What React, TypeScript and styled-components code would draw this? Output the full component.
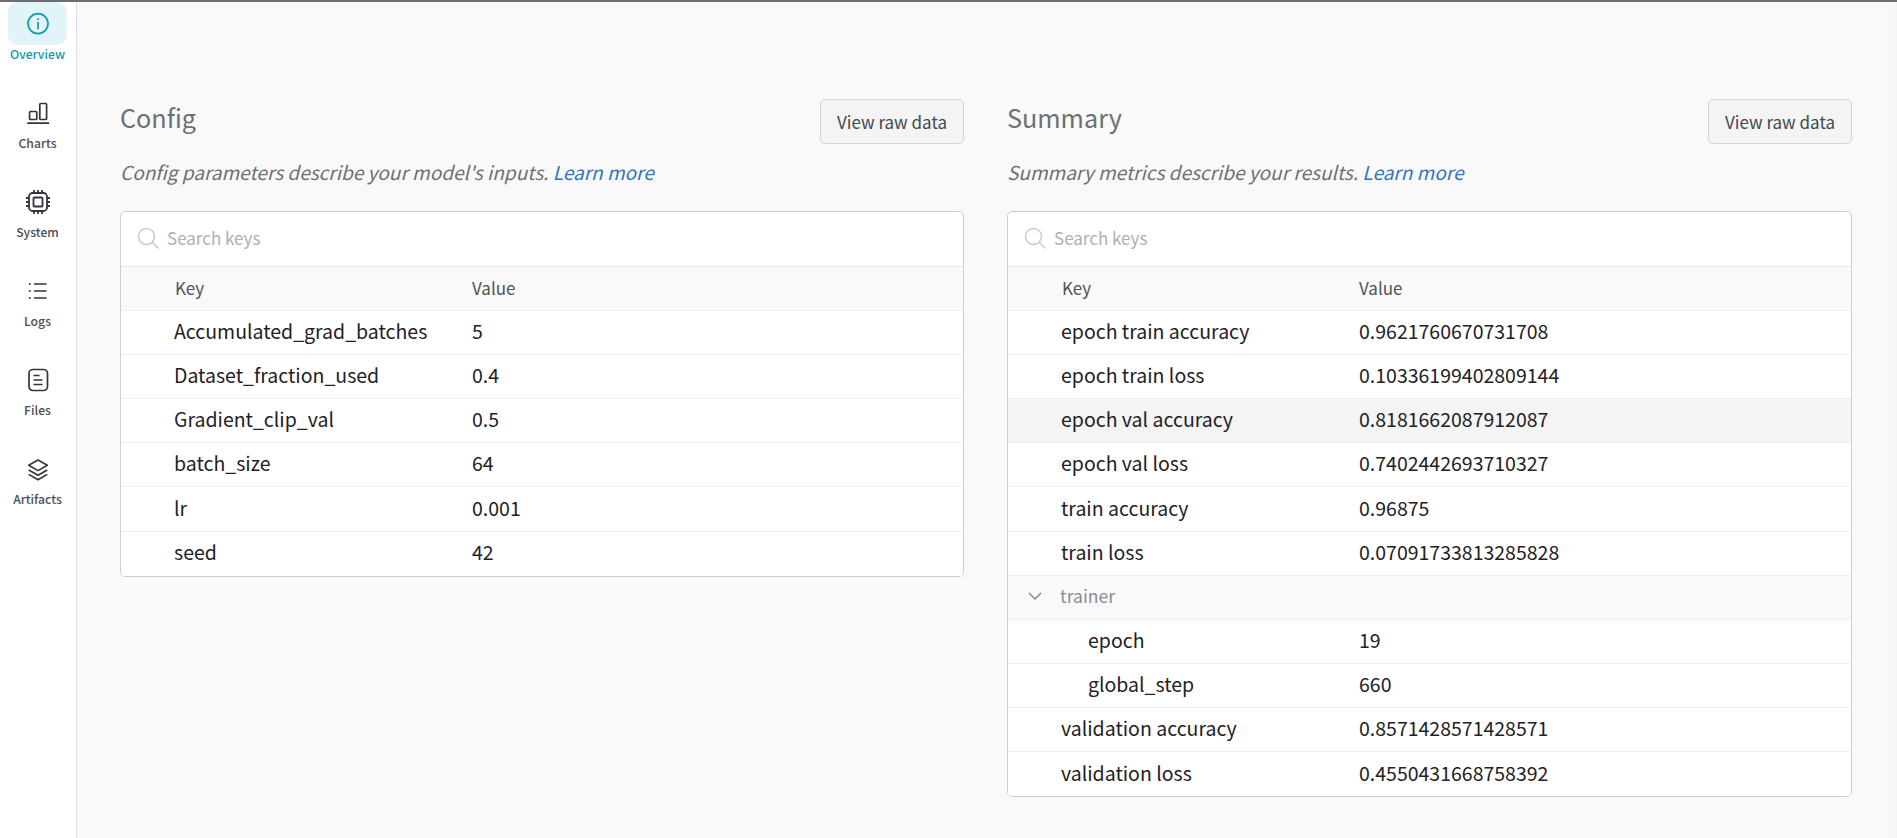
import React from 'react';
import styled, { createGlobalStyle } from 'styled-components';

const FONT = '"Noto Sans CJK JP", "Source Sans Pro", "Open Sans", sans-serif';

const GlobalStyle = createGlobalStyle`
  html, body {
    margin: 0;
    padding: 0;
    height: 100%;
    background: #f9f9f9;
    font-family: ${FONT};
  }
  * {
    box-sizing: border-box;
  }
`;

const Page = styled.div`
  display: flex;
  flex-direction: column;
  width: 1897px;
  height: 838px;
  overflow: hidden;
  border-top: 2px solid #6e6e6e;
`;
const Body = styled.div`
  display: flex;
  flex: 1;
  min-height: 0;
  border-right: 2px solid #f4f4f4;
`;
const Sidebar = styled.nav`
  flex: none;
  width: 77px;
  padding-right: 1px;
  background: #fff;
  border-right: 1px solid #dcdde0;
`;
const NavItem = styled.div`
  display: flex;
  flex-direction: column;
  align-items: center;
  height: 89px;
`;
const NavIcon = styled.div<{ active?: boolean }>`
  display: flex;
  align-items: center;
  justify-content: center;
  width: 59px;
  height: 43px;
  border-radius: 10px;
  background: ${({ active }) => (active ? '#e1f4f8' : 'transparent')};
  color: ${({ active }) => (active ? '#0d9db0' : '#33353c')};
`;
const NavLabel = styled.div<{ active?: boolean }>`
  font-size: 12.2px;
  line-height: 18px;
  font-weight: 500;
  color: ${({ active }) => (active ? '#0d9db0' : '#4b4e56')};
`;
const Content = styled.main`
  flex: 1;
  display: grid;
  grid-template-columns: 844px 845px;
  column-gap: 43px;
  padding: 97px 0 0 43px;
  align-items: start;
`;
const Section = styled.section`
  display: flex;
  flex-direction: column;
`;
const SectionHead = styled.div`
  display: flex;
  align-items: center;
  justify-content: space-between;
  height: 45px;
`;
const Title = styled.h2`
  margin: 0 0 9px;
  font-size: 25.2px;
  line-height: 40px;
  font-weight: 400;
  color: #6b6f76;
`;
const RawButton = styled.button`
  width: 144px;
  height: 45px;
  padding: 0;
  font-family: ${FONT};
  font-size: 17px;
  color: #454850;
  background: #f4f4f4;
  border: 1px solid #d4d4d4;
  border-radius: 5px;
`;
const Description = styled.p`
  margin: 13px 0 24px;
  font-size: 19.05px;
  line-height: 30px;
  font-style: italic;
  color: #6b6f76;
`;
const LearnMore = styled.a`
  color: #2f74c0;
`;
const Table = styled.div`
  background: #fff;
  border: 1px solid #cfcfcf;
  border-radius: 5px;
  overflow: hidden;
`;
const SearchRow = styled.div`
  display: flex;
  align-items: center;
  gap: 8px;
  height: 55px;
  padding: 0 0 3px 16px;
  border-bottom: 1px solid #e8e8e8;
`;
const SearchText = styled.span`
  font-size: 17px;
  color: #b0b0b0;
`;
const Row = styled.div<{ head?: boolean; group?: boolean; hover?: boolean }>`
  display: grid;
  grid-template-columns: 351px 1fr;
  align-items: center;
  height: 44.1px;
  padding-bottom: ${({ head }) => (head ? 1 : 3)}px;
  font-size: 19.5px;
  line-height: 26px;
  color: ${({ head, group }) => (head ? '#50535a' : group ? '#8a8d92' : '#1f2126')};
  background: ${({ head, group, hover }) =>
    hover ? '#f4f4f4' : head || group ? '#f9f9f9' : '#fff'};
  border-bottom: 1px solid #efefef;
  &:last-child {
    border-bottom: none;
  }
`;
const KeyCell = styled.div<{ depth?: number }>`
  display: flex;
  align-items: center;
  padding-left: ${({ depth }) => (depth ? 80 : 53)}px;
`;
const GroupKey = styled.div`
  display: flex;
  align-items: center;
  gap: 18px;
  padding-left: 20px;
  font-size: 17.6px;
`;
const HeadCell = styled.div`
  padding-left: 54px;
  font-size: 17px;
`;
const ValueCell = styled.div<{ head?: boolean }>`
  font-size: ${({ head }) => (head ? '17px' : 'inherit')};
`;

type TIconProps = { size?: number };

const InfoIcon = () => (
  <svg width="24" height="24" viewBox="0 0 24 24" fill="none" stroke="currentColor" strokeWidth="1.7">
    <circle cx="12" cy="11.6" r="10" />
    <path d="M12 10.6v6" strokeLinecap="round" />
    <circle cx="12" cy="7.2" r="1" fill="currentColor" stroke="none" />
  </svg>
);
const ChartIcon = () => (
  <svg width="24" height="24" viewBox="0 0 24 24" fill="none" stroke="currentColor" strokeWidth="1.7">
    <rect x="3.6" y="10.5" width="7.2" height="8" rx="1" />
    <rect x="13.8" y="2.5" width="6.8" height="16" rx="1" />
    <path d="M2 22.2h20.5" strokeLinecap="round" />
  </svg>
);
const ChipIcon = () => (
  <svg width="26" height="26" viewBox="0 0 26 26" fill="none" stroke="currentColor" strokeWidth="1.8">
    <rect x="4" y="4" width="18" height="18" rx="3.5" />
    <rect x="8.5" y="8.5" width="9" height="9" rx="0.8" />
    <path d="M9 1v3M13 1v3M17 1v3M9 22v3M13 22v3M17 22v3M1 9h3M1 13h3M1 17h3M22 9h3M22 13h3M22 17h3" />
  </svg>
);
const ListIcon = () => (
  <svg width="24" height="24" viewBox="0 0 24 24" fill="none" stroke="currentColor" strokeWidth="1.6">
    <path d="M8 5h12.5M8 12h12.5M8 19h12.5" />
    <circle cx="3.8" cy="5" r="1" fill="currentColor" stroke="none" />
    <circle cx="3.8" cy="12" r="1" fill="currentColor" stroke="none" />
    <circle cx="3.8" cy="19" r="1" fill="currentColor" stroke="none" />
  </svg>
);
const FileIcon = () => (
  <svg width="24" height="24" viewBox="0 0 24 24" fill="none" stroke="currentColor" strokeWidth="1.7">
    <rect x="3" y="1.5" width="18.5" height="21" rx="4" />
    <path d="M7.5 7.5h6M7.5 12h9M7.5 16.5h9" />
  </svg>
);
const LayersIcon = () => (
  <svg width="24" height="24" viewBox="0 0 24 24" fill="none" stroke="currentColor" strokeWidth="1.6" strokeLinejoin="round">
    <path d="M12 3l9.3 5.3L12 13.6 2.7 8.3z" />
    <path d="M2.7 13L12 18.3l9.3-5.3" />
    <path d="M2.7 17.4L12 22.7l9.3-5.3" />
  </svg>
);
const SearchIcon = ({ size = 22 }: TIconProps) => (
  <svg width={size} height={size} viewBox="0 0 22 22" fill="none" stroke="#c9c9c9" strokeWidth="1.5">
    <circle cx="9.5" cy="9.5" r="8" />
    <path d="M15.5 15.5l6 6" />
  </svg>
);
const Chevron = () => (
  <svg width="14" height="10" viewBox="0 0 14 10" fill="none" stroke="#7d8086" strokeWidth="1.3">
    <path d="M1 2l6 6 6-6" />
  </svg>
);

const NAV = [
  { label: 'Overview', icon: <InfoIcon />, active: true },
  { label: 'Charts', icon: <ChartIcon /> },
  { label: 'System', icon: <ChipIcon /> },
  { label: 'Logs', icon: <ListIcon /> },
  { label: 'Files', icon: <FileIcon /> },
  { label: 'Artifacts', icon: <LayersIcon /> },
];

type TRow = {
  name: string;
  value?: string;
  depth?: number;
  group?: boolean;
  hover?: boolean;
};

const CONFIG: TRow[] = [
  { name: 'Accumulated_grad_batches', value: '5' },
  { name: 'Dataset_fraction_used', value: '0.4' },
  { name: 'Gradient_clip_val', value: '0.5' },
  { name: 'batch_size', value: '64' },
  { name: 'lr', value: '0.001' },
  { name: 'seed', value: '42' },
];

const SUMMARY: TRow[] = [
  { name: 'epoch train accuracy', value: '0.9621760670731708' },
  { name: 'epoch train loss', value: '0.10336199402809144' },
  { name: 'epoch val accuracy', value: '0.8181662087912087', hover: true },
  { name: 'epoch val loss', value: '0.7402442693710327' },
  { name: 'train accuracy', value: '0.96875' },
  { name: 'train loss', value: '0.07091733813285828' },
  { name: 'trainer', group: true },
  { name: 'epoch', value: '19', depth: 1 },
  { name: 'global_step', value: '660', depth: 1 },
  { name: 'validation accuracy', value: '0.8571428571428571' },
  { name: 'validation loss', value: '0.4550431668758392' },
];

const KeyTable = ({ rows }: { rows: TRow[] }) => (
  <Table>
    <SearchRow>
      <SearchIcon />
      <SearchText>Search keys</SearchText>
    </SearchRow>
    <Row head>
      <HeadCell>Key</HeadCell>
      <ValueCell head>Value</ValueCell>
    </Row>
    {rows.map((row) => (
      <Row key={row.name} group={row.group} hover={row.hover}>
        {row.group ? (
          <GroupKey>
            <Chevron />
            {row.name}
          </GroupKey>
        ) : (
          <KeyCell depth={row.depth}>{row.name}</KeyCell>
        )}
        <ValueCell>{row.value}</ValueCell>
      </Row>
    ))}
  </Table>
);

type TPanel = {
  title: string;
  description: string;
  rows: TRow[];
};

const Panel = ({ title, description, rows }: TPanel) => (
  <Section>
    <SectionHead>
      <Title>{title}</Title>
      <RawButton>View raw data</RawButton>
    </SectionHead>
    <Description>
      {description} <LearnMore>Learn more</LearnMore>
    </Description>
    <KeyTable rows={rows} />
  </Section>
);

const App = () => (
  <>
    <GlobalStyle />
    <Page>
      <Body>
        <Sidebar>
          {NAV.map((item) => (
            <NavItem key={item.label}>
              <NavIcon active={item.active}>{item.icon}</NavIcon>
              <NavLabel active={item.active}>{item.label}</NavLabel>
            </NavItem>
          ))}
        </Sidebar>
        <Content>
          <Panel title="Config" description="Config parameters describe your model's inputs." rows={CONFIG} />
          <Panel title="Summary" description="Summary metrics describe your results." rows={SUMMARY} />
        </Content>
      </Body>
    </Page>
  </>
);

export default App;
